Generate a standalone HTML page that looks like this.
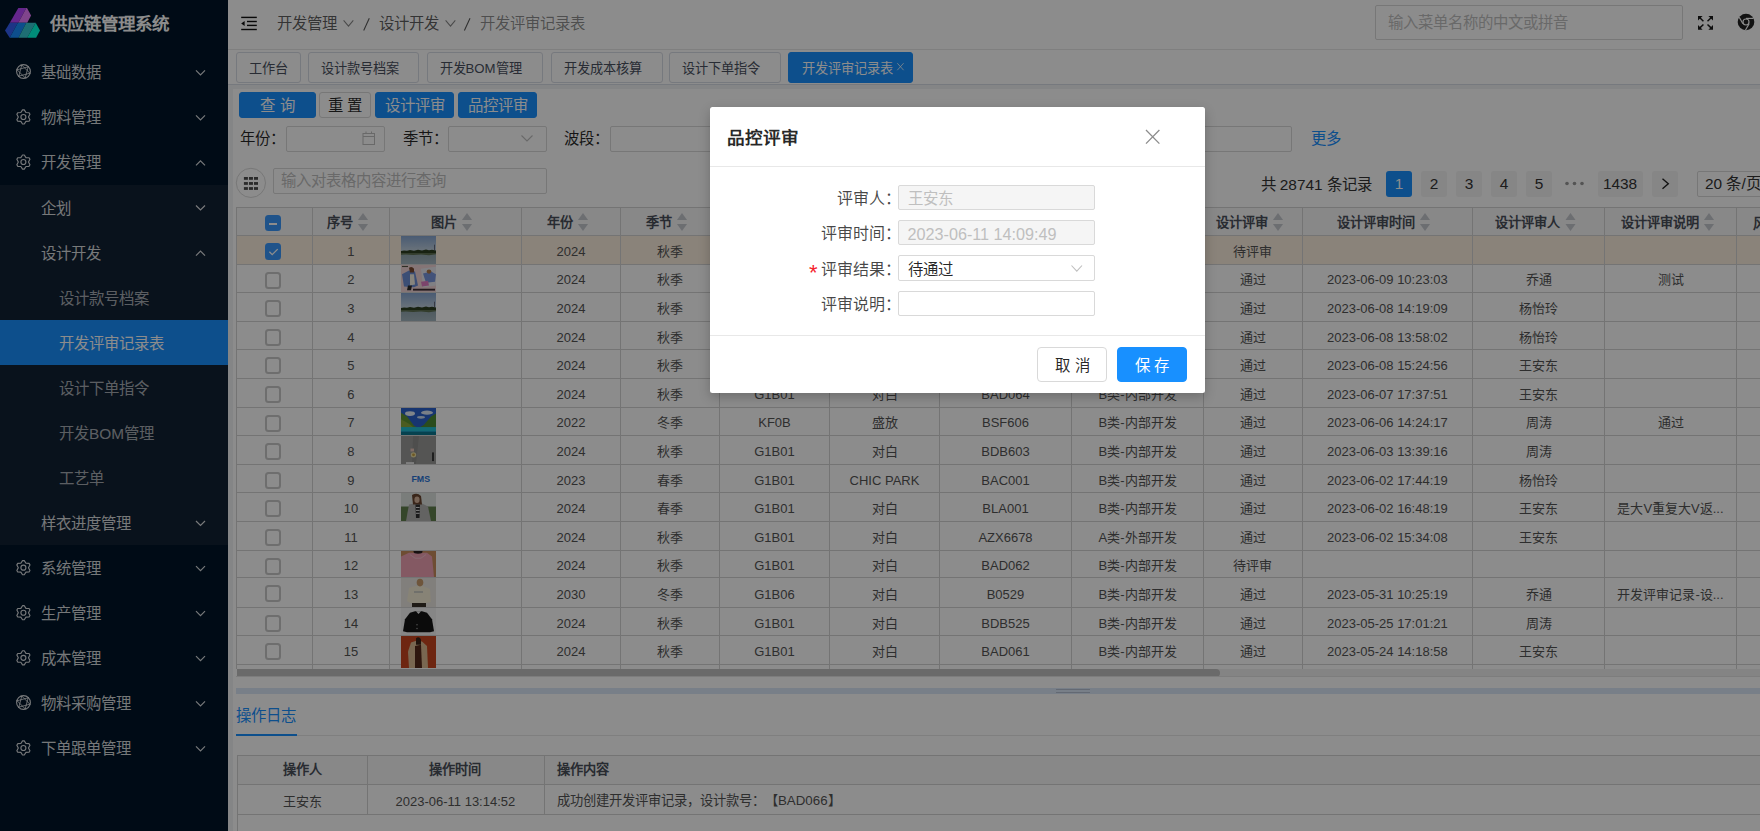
<!DOCTYPE html><html lang='zh-CN'><head><meta charset='utf-8'><style>*{box-sizing:border-box;margin:0;padding:0}
html,body{width:1760px;height:831px;overflow:hidden;background:#f0f2f5;font-family:'Liberation Sans',sans-serif;color:rgba(0,0,0,.65);text-spacing-trim:space-all}
.a{position:absolute}
.t{position:absolute;white-space:nowrap;line-height:1}
#side{position:absolute;left:0;top:0;width:228px;height:831px;background:#001529;z-index:2}
#sub{position:absolute;left:0;top:185px;width:228px;height:360px;background:#122133}
#act{position:absolute;left:0;top:320px;width:228px;height:45px;background:#1890ff}
.mt{font-size:15.4px;transform:translateY(-50%)}
.l0{color:rgba(255,255,255,.85)}
.l1{color:rgba(255,255,255,.85)}
.l2{color:rgba(255,255,255,.65)}
.lact{color:#fff}
.ttl{left:49.5px;top:25.3px;transform:translateY(-50%);font-size:17.5px;font-weight:bold;color:#fff}
#mask{position:absolute;left:0;top:0;width:1760px;height:831px;background:rgba(0,0,0,.45);z-index:10}
#hdr{position:absolute;left:228px;top:0;width:1532px;height:50px;background:#fff;border-bottom:1px solid #e8e8e8}
#tabs{position:absolute;left:228px;top:50px;width:1532px;height:35px;background:#fff;border-bottom:1px solid #d8dce5}
#panel{position:absolute;left:233px;top:88.7px;width:1527px;height:742.3px;background:#fff}
.bc{font-size:15.4px;transform:translateY(-50%)}
.ph{color:#bfbfbf;transform:translateY(-50%)}
.tab{position:absolute;top:52px;height:30.6px;border:1px solid #d8dce5;border-radius:3px;background:#fff;font-size:13.2px;line-height:31.4px;color:#495060;white-space:nowrap}
.tabact{background:#1890ff;border-color:#1890ff;color:#fff}
.btn{position:absolute;top:92px;height:26px;border-radius:3px;font-size:15.4px;line-height:26.8px;text-align:center;white-space:nowrap}
.bp{background:#1890ff;border:1px solid #1890ff;color:#fff}
.bd{background:#fff;border:1px solid #d9d9d9;color:rgba(0,0,0,.85)}
.inp{position:absolute;border:1px solid #d9d9d9;border-radius:2px;background:#fff}
.lbl{font-size:15.4px;color:rgba(0,0,0,.85);transform:translateY(-50%)}
.pg{position:absolute;top:171px;height:26px;border-radius:3px;background:#f4f4f5;font-size:15.4px;line-height:26px;text-align:center;color:#333}
.pga{background:#1890ff;color:#fff}
.hd{font-size:13.2px;font-weight:bold;color:#4a4f5a;transform:translate(-50%,-50%)}
.srt{display:inline-block;position:relative;width:11px;height:18px;margin-left:5px;vertical-align:middle;top:-2px}
.su{position:absolute;left:0;top:0;border-left:5.5px solid transparent;border-right:5.5px solid transparent;border-bottom:7px solid #c5c8ce}
.sd{position:absolute;left:0;top:11.8px;border-left:5.5px solid transparent;border-right:5.5px solid transparent;border-top:7px solid #c5c8ce}
.td{font-size:13px;color:#555;transform:translate(-50%,-50%)}
.cb{position:absolute;width:16.4px;height:16.4px;border:2px solid #c8c8c8;border-radius:3.5px;background:#fff}
.cbon{background:#3a98fc;border-color:#3a98fc}
#modal{position:absolute;left:710px;top:107.3px;width:495px;height:285.4px;background:#fff;border-radius:2.5px;box-shadow:0 4px 12px rgba(0,0,0,.22);z-index:11}
.mlb{font-size:16px;color:rgba(0,0,0,.72);transform:translateY(-50%)}
.mtx{font-size:15.4px;transform:translateY(-50%)}
.mbtn{position:absolute;height:34.4px;border-radius:4px;font-size:15.4px;line-height:35.4px;text-align:center;white-space:nowrap}
</style></head><body><div id='side'><div id='sub'></div><div id='act'></div><svg class='a' style='left:0;top:0' width='228' height='831' viewBox='0 0 228 831'>
<polygon points='18.3,8 26.3,8 18.3,22.8 9.8,22.8' fill='#b645ff'/>
<polygon points='26.3,8 27,8 31.1,15.4 27.2,22.8 18.3,22.8' fill='#e97cff'/>
<polygon points='9.8,22.8 17.9,22.8 9.7,37.8 5,30.6' fill='#335ff5'/>
<polygon points='17.9,22.8 26.3,22.8 18.5,37.8 9.7,37.8' fill='#198eff'/>
<polygon points='26.3,22.8 35.7,22.8 27.2,37.8 18.5,37.8' fill='#37c8d1'/>
<polygon points='35.7,22.8 40,30.6 36.1,37.8 27.2,37.8' fill='#00ffda'/>
<circle cx='23.50' cy='71.50' r='6.90' fill='none' stroke='rgba(255,255,255,0.85)' stroke-width='1.1'/><line x1='28.26' y1='66.50' x2='25.12' y2='78.21' stroke='rgba(255,255,255,0.85)' stroke-width='0.85'/><line x1='30.21' y1='73.12' x2='18.50' y2='76.26' stroke='rgba(255,255,255,0.85)' stroke-width='0.85'/><line x1='25.45' y1='78.12' x2='16.88' y2='69.55' stroke='rgba(255,255,255,0.85)' stroke-width='0.85'/><line x1='18.74' y1='76.50' x2='21.88' y2='64.79' stroke='rgba(255,255,255,0.85)' stroke-width='0.85'/><line x1='16.79' y1='69.88' x2='28.50' y2='66.74' stroke='rgba(255,255,255,0.85)' stroke-width='0.85'/><line x1='21.55' y1='64.88' x2='30.12' y2='73.45' stroke='rgba(255,255,255,0.85)' stroke-width='0.85'/><polyline points='196.0,70.3 200.5,74.8 205.0,70.3' fill='none' stroke='rgba(255,255,255,0.85)' stroke-width='1.2'/><path d='M22.53,109.92 L24.27,109.92 L25.95,112.55 L29.07,112.70 L29.94,114.20 L28.50,116.97 L29.94,119.74 L29.07,121.24 L25.95,121.39 L24.27,124.02 L22.53,124.02 L20.85,121.39 L17.73,121.24 L16.86,119.74 L18.30,116.97 L16.86,114.20 L17.73,112.70 L20.85,112.55Z' fill='none' stroke='rgba(255,255,255,0.85)' stroke-width='1.15' stroke-linejoin='round'/><circle cx='23.40' cy='116.97' r='2.5' fill='none' stroke='rgba(255,255,255,0.85)' stroke-width='1.15'/><polyline points='196.0,115.4 200.5,119.9 205.0,115.4' fill='none' stroke='rgba(255,255,255,0.85)' stroke-width='1.2'/><path d='M22.53,154.99 L24.27,154.99 L25.95,157.62 L29.07,157.77 L29.94,159.27 L28.50,162.04 L29.94,164.81 L29.07,166.31 L25.95,166.46 L24.27,169.09 L22.53,169.09 L20.85,166.46 L17.73,166.31 L16.86,164.81 L18.30,162.04 L16.86,159.27 L17.73,157.77 L20.85,157.62Z' fill='none' stroke='rgba(255,255,255,0.85)' stroke-width='1.15' stroke-linejoin='round'/><circle cx='23.40' cy='162.04' r='2.5' fill='none' stroke='rgba(255,255,255,0.85)' stroke-width='1.15'/><polyline points='196.0,165.4 200.5,160.9 205.0,165.4' fill='none' stroke='rgba(255,255,255,0.85)' stroke-width='1.2'/><polyline points='196.0,205.5 200.5,210.0 205.0,205.5' fill='none' stroke='rgba(255,255,255,0.85)' stroke-width='1.2'/><polyline points='196.0,255.6 200.5,251.1 205.0,255.6' fill='none' stroke='rgba(255,255,255,0.85)' stroke-width='1.2'/><polyline points='196.0,521.0 200.5,525.5 205.0,521.0' fill='none' stroke='rgba(255,255,255,0.85)' stroke-width='1.2'/><path d='M22.53,560.62 L24.27,560.62 L25.95,563.25 L29.07,563.40 L29.94,564.90 L28.50,567.67 L29.94,570.44 L29.07,571.94 L25.95,572.09 L24.27,574.72 L22.53,574.72 L20.85,572.09 L17.73,571.94 L16.86,570.44 L18.30,567.67 L16.86,564.90 L17.73,563.40 L20.85,563.25Z' fill='none' stroke='rgba(255,255,255,0.85)' stroke-width='1.15' stroke-linejoin='round'/><circle cx='23.40' cy='567.67' r='2.5' fill='none' stroke='rgba(255,255,255,0.85)' stroke-width='1.15'/><polyline points='196.0,566.1 200.5,570.6 205.0,566.1' fill='none' stroke='rgba(255,255,255,0.85)' stroke-width='1.2'/><path d='M22.53,605.69 L24.27,605.69 L25.95,608.32 L29.07,608.47 L29.94,609.97 L28.50,612.74 L29.94,615.51 L29.07,617.01 L25.95,617.16 L24.27,619.79 L22.53,619.79 L20.85,617.16 L17.73,617.01 L16.86,615.51 L18.30,612.74 L16.86,609.97 L17.73,608.47 L20.85,608.32Z' fill='none' stroke='rgba(255,255,255,0.85)' stroke-width='1.15' stroke-linejoin='round'/><circle cx='23.40' cy='612.74' r='2.5' fill='none' stroke='rgba(255,255,255,0.85)' stroke-width='1.15'/><polyline points='196.0,611.1 200.5,615.6 205.0,611.1' fill='none' stroke='rgba(255,255,255,0.85)' stroke-width='1.2'/><path d='M22.53,650.76 L24.27,650.76 L25.95,653.39 L29.07,653.54 L29.94,655.04 L28.50,657.81 L29.94,660.58 L29.07,662.08 L25.95,662.23 L24.27,664.86 L22.53,664.86 L20.85,662.23 L17.73,662.08 L16.86,660.58 L18.30,657.81 L16.86,655.04 L17.73,653.54 L20.85,653.39Z' fill='none' stroke='rgba(255,255,255,0.85)' stroke-width='1.15' stroke-linejoin='round'/><circle cx='23.40' cy='657.81' r='2.5' fill='none' stroke='rgba(255,255,255,0.85)' stroke-width='1.15'/><polyline points='196.0,656.2 200.5,660.7 205.0,656.2' fill='none' stroke='rgba(255,255,255,0.85)' stroke-width='1.2'/><circle cx='23.50' cy='702.48' r='6.90' fill='none' stroke='rgba(255,255,255,0.85)' stroke-width='1.1'/><line x1='28.26' y1='697.48' x2='25.12' y2='709.19' stroke='rgba(255,255,255,0.85)' stroke-width='0.85'/><line x1='30.21' y1='704.10' x2='18.50' y2='707.24' stroke='rgba(255,255,255,0.85)' stroke-width='0.85'/><line x1='25.45' y1='709.10' x2='16.88' y2='700.53' stroke='rgba(255,255,255,0.85)' stroke-width='0.85'/><line x1='18.74' y1='707.48' x2='21.88' y2='695.77' stroke='rgba(255,255,255,0.85)' stroke-width='0.85'/><line x1='16.79' y1='700.86' x2='28.50' y2='697.72' stroke='rgba(255,255,255,0.85)' stroke-width='0.85'/><line x1='21.55' y1='695.86' x2='30.12' y2='704.43' stroke='rgba(255,255,255,0.85)' stroke-width='0.85'/><polyline points='196.0,701.3 200.5,705.8 205.0,701.3' fill='none' stroke='rgba(255,255,255,0.85)' stroke-width='1.2'/><path d='M22.53,740.90 L24.27,740.90 L25.95,743.53 L29.07,743.68 L29.94,745.18 L28.50,747.95 L29.94,750.72 L29.07,752.22 L25.95,752.37 L24.27,755.00 L22.53,755.00 L20.85,752.37 L17.73,752.22 L16.86,750.72 L18.30,747.95 L16.86,745.18 L17.73,743.68 L20.85,743.53Z' fill='none' stroke='rgba(255,255,255,0.85)' stroke-width='1.15' stroke-linejoin='round'/><circle cx='23.40' cy='747.95' r='2.5' fill='none' stroke='rgba(255,255,255,0.85)' stroke-width='1.15'/><polyline points='196.0,746.3 200.5,750.8 205.0,746.3' fill='none' stroke='rgba(255,255,255,0.85)' stroke-width='1.2'/></svg><div class='t ttl'>供应链管理系统</div><div class='t mt l0' style='left:41px;top:73.3px'>基础数据</div><div class='t mt l0' style='left:41px;top:118.4px'>物料管理</div><div class='t mt l0' style='left:41px;top:163.4px'>开发管理</div><div class='t mt l1' style='left:41px;top:208.5px'>企划</div><div class='t mt l1' style='left:41px;top:253.6px'>设计开发</div><div class='t mt l2' style='left:59px;top:298.7px'>设计款号档案</div><div class='t mt lact' style='left:59px;top:343.7px'>开发评审记录表</div><div class='t mt l2' style='left:59px;top:388.8px'>设计下单指令</div><div class='t mt l2' style='left:59px;top:433.9px'>开发BOM管理</div><div class='t mt l2' style='left:59px;top:478.9px'>工艺单</div><div class='t mt l1' style='left:41px;top:524.0px'>样衣进度管理</div><div class='t mt l0' style='left:41px;top:569.1px'>系统管理</div><div class='t mt l0' style='left:41px;top:614.1px'>生产管理</div><div class='t mt l0' style='left:41px;top:659.2px'>成本管理</div><div class='t mt l0' style='left:41px;top:704.3px'>物料采购管理</div><div class='t mt l0' style='left:41px;top:749.3px'>下单跟单管理</div></div><div id='hdr'></div><div id='tabs'></div><div id='panel'></div><svg class='a' style='left:0;top:0;z-index:3' width='1760' height='90' viewBox='0 0 1760 90'>
<rect x='241.2' y='16.7' width='15.6' height='1.4' fill='#111'/>
<rect x='247' y='20.8' width='9.8' height='1.4' fill='#111'/>
<rect x='247' y='24.7' width='9.8' height='1.4' fill='#111'/>
<rect x='241.2' y='28.8' width='15.6' height='1.4' fill='#111'/>
<polygon points='241.2,23.4 244.6,20.9 244.6,25.9' fill='#111'/>
<polyline points='343.6,20.4 348.5,26.2 353.3,20.4' fill='none' stroke='#888' stroke-width='1.05'/>
<polyline points='445.6,20.4 450.5,26.2 455.3,20.4' fill='none' stroke='#888' stroke-width='1.05'/>
<line x1='369.3' y1='18.2' x2='363.7' y2='30.5' stroke='#555' stroke-width='1.05'/>
<line x1='470' y1='18.2' x2='464.4' y2='30.5' stroke='#555' stroke-width='1.05'/>
<g stroke='#1a1a1a' stroke-width='1.5' fill='#1a1a1a'>
<line x1='1699.3' y1='17.3' x2='1703.4' y2='21.2'/><polygon stroke='none' points='1698,16 1702.6,16 1698,20.6'/>
<line x1='1711.6' y1='17.3' x2='1707.5' y2='21.2'/><polygon stroke='none' points='1713,16 1708.4,16 1713,20.6'/>
<line x1='1699.3' y1='28.4' x2='1703.4' y2='24.5'/><polygon stroke='none' points='1698,29.7 1702.6,29.7 1698,25.1'/>
<line x1='1711.6' y1='28.4' x2='1707.5' y2='24.5'/><polygon stroke='none' points='1713,29.7 1708.4,29.7 1713,25.1'/>
</g>
<circle cx='1746' cy='22' r='8.3' fill='#222'/>
<circle cx='1746' cy='22' r='3.6' fill='#fff'/>
<circle cx='1746' cy='22' r='2.4' fill='#222'/>
<path d='M1746,18.4 L1753.5,18.4' stroke='#fff' stroke-width='1.2'/>
<path d='M1742.9,23.8 L1739.2,17.3' stroke='#fff' stroke-width='1.2'/>
<path d='M1749.1,23.8 L1745.4,30.2' stroke='#fff' stroke-width='1.2'/>
</svg><div class='t bc' style='left:277px;top:23.5px;color:rgba(0,0,0,.65)'>开发管理</div><div class='t bc' style='left:378.5px;top:23.5px;color:rgba(0,0,0,.65)'>设计开发</div><div class='t bc' style='left:479.5px;top:23.5px;color:rgba(0,0,0,.45)'>开发评审记录表</div><div class='inp' style='left:1375px;top:5px;width:308px;height:35px'></div><div class='t ph' style='left:1388px;top:22.5px;font-size:15.4px'>输入菜单名称的中文或拼音</div><div class='tab' style='left:236.4px;width:64.2px;padding-left:11.5px'>工作台</div><div class='tab' style='left:308.2px;width:111.3px;padding-left:11.5px'>设计款号档案</div><div class='tab' style='left:427.0px;width:116.4px;padding-left:11.5px'>开发BOM管理</div><div class='tab' style='left:551.4px;width:111.3px;padding-left:11.5px'>开发成本核算</div><div class='tab' style='left:669.3px;width:111.4px;padding-left:11.5px'>设计下单指令</div><div class='tab tabact' style='left:788px;width:125px;padding-left:12.5px'>开发评审记录表</div><svg class='a' style='left:0;top:0;z-index:1' width='920' height='90'><path d='M897.3,63.2 L903.6,70.2 M903.6,63.2 L897.3,70.2' stroke='rgba(255,255,255,.85)' stroke-width='0.9' fill='none'/></svg><div class='btn bp' style='left:239px;width:77px'>查&nbsp;询</div><div class='btn bd' style='left:319.3px;width:52px'>重&nbsp;置</div><div class='btn bp' style='left:375px;width:79px'>设计评审</div><div class='btn bp' style='left:458px;width:79px'>品控评审</div><div class='t lbl' style='left:240px;top:139px'>年份：</div><div class='inp' style='left:286px;top:126px;width:98.5px;height:25.5px'></div><div class='t lbl' style='left:402.5px;top:139px'>季节：</div><div class='inp' style='left:448px;top:126px;width:98.7px;height:25.5px'></div><div class='t lbl' style='left:564px;top:139px'>波段：</div><div class='inp' style='left:610px;top:126px;width:682.4px;height:25.5px'></div><div class='t' style='left:1310.5px;top:139px;font-size:15.4px;color:#1890ff;transform:translateY(-50%)'>更多</div><svg class='a' style='left:0;top:0;z-index:3' width='1760' height='210' viewBox='0 0 1760 210'>
<rect x='363' y='133.5' width='11.5' height='11' fill='none' stroke='#bfbfbf' stroke-width='1'/>
<line x1='363' y1='136.5' x2='374.5' y2='136.5' stroke='#bfbfbf' stroke-width='1'/>
<line x1='366' y1='131.5' x2='366' y2='134' stroke='#bfbfbf'/><line x1='371.5' y1='131.5' x2='371.5' y2='134' stroke='#bfbfbf'/>
<polyline points='521.5,135.5 527,141 532.5,135.5' fill='none' stroke='#bfbfbf' stroke-width='1.1'/>
<circle cx='250.9' cy='182.9' r='14.6' fill='#fff' stroke='#d9d9d9' stroke-width='1'/>
</svg><svg class='a' style='left:0;top:0;z-index:3' width='300' height='210'><rect x='243.90' y='177.00' width='4' height='2.8' fill='#4e4e4e'/><rect x='248.95' y='177.00' width='4' height='2.8' fill='#4e4e4e'/><rect x='254.00' y='177.00' width='4' height='2.8' fill='#4e4e4e'/><rect x='243.90' y='182.05' width='4' height='2.8' fill='#4e4e4e'/><rect x='248.95' y='182.05' width='4' height='2.8' fill='#4e4e4e'/><rect x='254.00' y='182.05' width='4' height='2.8' fill='#4e4e4e'/><rect x='243.90' y='187.10' width='4' height='2.8' fill='#4e4e4e'/><rect x='248.95' y='187.10' width='4' height='2.8' fill='#4e4e4e'/><rect x='254.00' y='187.10' width='4' height='2.8' fill='#4e4e4e'/></svg><div class='inp' style='left:272.5px;top:168px;width:274.2px;height:25.8px'></div><div class='t ph' style='left:281px;top:181px;font-size:15.4px'>输入对表格内容进行查询</div><div class='t' style='left:1260.5px;top:184.5px;font-size:15.4px;color:#333;transform:translateY(-50%)'>共 28741 条记录</div><div class='pg pga' style='left:1386.0px;width:26.0px'>1</div><div class='pg' style='left:1421.0px;width:26.0px'>2</div><div class='pg' style='left:1456.0px;width:26.0px'>3</div><div class='pg' style='left:1491.0px;width:26.0px'>4</div><div class='pg' style='left:1526.0px;width:26.0px'>5</div><div class='pg' style='left:1597.5px;width:45.0px'>1438</div><div class='pg' style='left:1652.0px;width:25.7px'></div><svg class='a' style='left:1560px;top:176px;z-index:1' width='30' height='14'><circle cx='7' cy='7.5' r='1.8' fill='#9a9a9a'/><circle cx='14.5' cy='7.5' r='1.8' fill='#9a9a9a'/><circle cx='22' cy='7.5' r='1.8' fill='#9a9a9a'/></svg><svg class='a' style='left:1652px;top:171px;z-index:1' width='26' height='26'><polyline points='10.5,7.8 16.3,12.8 10.5,17.8' fill='none' stroke='#222' stroke-width='1.4'/></svg><div class='inp' style='left:1696.5px;top:171px;width:120px;height:25.5px'></div><div class='t' style='left:1705px;top:184px;font-size:15.4px;color:#333;transform:translateY(-50%)'>20 条/页</div><div class='a' style='left:236px;top:207px;width:1524px;height:28px;background:#f7f7f7'></div><div class='a' style='left:236px;top:235px;width:1524px;height:29px;background:#fbeede'></div><div class='a' style='left:236px;top:207px;width:1524px;height:1px;background:#d4d4d4'></div><div class='a' style='left:236px;top:235px;width:1524px;height:1px;background:#d4d4d4'></div><div class='a' style='left:236px;top:264px;width:1524px;height:1px;background:#d4d4d4'></div><div class='a' style='left:236px;top:292px;width:1524px;height:1px;background:#d4d4d4'></div><div class='a' style='left:236px;top:321px;width:1524px;height:1px;background:#d4d4d4'></div><div class='a' style='left:236px;top:349px;width:1524px;height:1px;background:#d4d4d4'></div><div class='a' style='left:236px;top:378px;width:1524px;height:1px;background:#d4d4d4'></div><div class='a' style='left:236px;top:407px;width:1524px;height:1px;background:#d4d4d4'></div><div class='a' style='left:236px;top:435px;width:1524px;height:1px;background:#d4d4d4'></div><div class='a' style='left:236px;top:464px;width:1524px;height:1px;background:#d4d4d4'></div><div class='a' style='left:236px;top:492px;width:1524px;height:1px;background:#d4d4d4'></div><div class='a' style='left:236px;top:521px;width:1524px;height:1px;background:#d4d4d4'></div><div class='a' style='left:236px;top:550px;width:1524px;height:1px;background:#d4d4d4'></div><div class='a' style='left:236px;top:577px;width:1524px;height:1px;background:#d4d4d4'></div><div class='a' style='left:236px;top:607px;width:1524px;height:1px;background:#d4d4d4'></div><div class='a' style='left:236px;top:635px;width:1524px;height:1px;background:#d4d4d4'></div><div class='a' style='left:236px;top:664px;width:1524px;height:1px;background:#d4d4d4'></div><div class='a' style='left:236px;top:207px;width:1px;height:462px;background:#d4d4d4'></div><div class='a' style='left:312px;top:207px;width:1px;height:462px;background:#d4d4d4'></div><div class='a' style='left:389px;top:207px;width:1px;height:462px;background:#d4d4d4'></div><div class='a' style='left:521px;top:207px;width:1px;height:462px;background:#d4d4d4'></div><div class='a' style='left:620px;top:207px;width:1px;height:462px;background:#d4d4d4'></div><div class='a' style='left:719px;top:207px;width:1px;height:462px;background:#d4d4d4'></div><div class='a' style='left:829px;top:207px;width:1px;height:462px;background:#d4d4d4'></div><div class='a' style='left:939px;top:207px;width:1px;height:462px;background:#d4d4d4'></div><div class='a' style='left:1071px;top:207px;width:1px;height:462px;background:#d4d4d4'></div><div class='a' style='left:1203px;top:207px;width:1px;height:462px;background:#d4d4d4'></div><div class='a' style='left:1302px;top:207px;width:1px;height:462px;background:#d4d4d4'></div><div class='a' style='left:1472px;top:207px;width:1px;height:462px;background:#d4d4d4'></div><div class='a' style='left:1604px;top:207px;width:1px;height:462px;background:#d4d4d4'></div><div class='a' style='left:1736px;top:207px;width:1px;height:462px;background:#d4d4d4'></div><div class='t hd' style='left:347.9px;top:223.6px'>序号<span class='srt'><i class='su'></i><i class='sd'></i></span></div><div class='t hd' style='left:452.4px;top:223.6px'>图片<span class='srt'><i class='su'></i><i class='sd'></i></span></div><div class='t hd' style='left:568.0px;top:223.6px'>年份<span class='srt'><i class='su'></i><i class='sd'></i></span></div><div class='t hd' style='left:667.0px;top:223.6px'>季节<span class='srt'><i class='su'></i><i class='sd'></i></span></div><div class='t hd' style='left:771.5px;top:223.6px'>波段<span class='srt'><i class='su'></i><i class='sd'></i></span></div><div class='t hd' style='left:881.5px;top:223.6px'>品牌<span class='srt'><i class='su'></i><i class='sd'></i></span></div><div class='t hd' style='left:1002.5px;top:223.6px'>设计款号<span class='srt'><i class='su'></i><i class='sd'></i></span></div><div class='t hd' style='left:1134.6px;top:223.6px'>开发类型<span class='srt'><i class='su'></i><i class='sd'></i></span></div><div class='t hd' style='left:1249.9px;top:223.6px'>设计评审<span class='srt'><i class='su'></i><i class='sd'></i></span></div><div class='t hd' style='left:1384.4px;top:223.6px'>设计评审时间<span class='srt'><i class='su'></i><i class='sd'></i></span></div><div class='t hd' style='left:1535.5px;top:223.6px'>设计评审人<span class='srt'><i class='su'></i><i class='sd'></i></span></div><div class='t hd' style='left:1667.5px;top:223.6px'>设计评审说明<span class='srt'><i class='su'></i><i class='sd'></i></span></div><div class='t hd' style='left:1799.2px;top:223.6px'>风格<span class='srt'><i class='su'></i><i class='sd'></i></span></div><div class='cb cbon' style='left:265px;top:215px'><i style='position:absolute;left:2.1px;top:6.4px;width:8.2px;height:1.2px;background:#fff'></i></div><div class='t hd' style='left:1752.5px;top:223.6px;transform:translateY(-50%)'>风格</div><div class='cb cbon' style='left:265px;top:243.2px'><svg class='a' style='left:0;top:0' width='13' height='13'><polyline points='2.4,6.8 5.2,9.6 10.7,4.1' fill='none' stroke='#fff' stroke-width='1.3'/></svg></div><div class='t td' style='left:350.9px;top:250.7px'>1</div><svg class='a' style='left:401.0px;top:236.0px' width='35.0' height='28.0' viewBox='0 0 35 29' preserveAspectRatio='none'><defs><linearGradient id='lk' x1='0' y1='0' x2='0' y2='1'><stop offset='0' stop-color='#86a6d2'/><stop offset='1' stop-color='#c8d6e0'/></linearGradient><linearGradient id='lw' x1='0' y1='0' x2='0' y2='1'><stop offset='0' stop-color='#8fa4ac'/><stop offset='1' stop-color='#a4b6c0'/></linearGradient></defs><rect width='35' height='17' fill='url(#lk)'/><rect y='17' width='35' height='12' fill='url(#lw)'/><path d='M0,15.6 L3,14.9 L6,15.4 L9,14.6 L13,15.3 L17,14.2 L21,14.9 L25,14 L28,14.8 L31,14.2 L35,14.9 V17.6 H0Z' fill='#2c3f22'/><path d='M0,17.5 L35,17.5 V19 L28,20 L20,19.2 L12,19.8 L5,19.2 L0,19.5Z' fill='#5d7050'/><rect x='33.3' y='9' width='0.7' height='6' fill='#445'/></svg><div class='t td' style='left:571.0px;top:250.7px'>2024</div><div class='t td' style='left:670.0px;top:250.7px'>秋季</div><div class='t td' style='left:774.5px;top:250.7px'>G1B01</div><div class='t td' style='left:884.5px;top:250.7px'>对白</div><div class='t td' style='left:1005.5px;top:250.7px'>BAD066</div><div class='t td' style='left:1137.6px;top:250.7px'>B类-内部开发</div><div class='t td' style='left:1252.9px;top:250.7px'>待评审</div><div class='cb' style='left:265px;top:272.2px'></div><div class='t td' style='left:350.9px;top:279.3px'>2</div><svg class='a' style='left:401.0px;top:265.0px' width='35.0' height='27.0' viewBox='0 0 35 29' preserveAspectRatio='none'><rect width='35' height='29' fill='#f2d6d8'/><path d='M20,4 L35,2 L35,22 L22,24Z' fill='#eaeaf0'/><path d='M1,10 L8,6 L14,7 L17,22 L13,24 L3,23Z' fill='#6d8ed6'/><path d='M9,10 L13,10 L14,21 L9,22Z' fill='#f4f0e4'/><path d='M8,3 Q11,1 13,4 L13,8 L9,8Z' fill='#7a4a30'/><path d='M22,9 L30,7 L35,10 L34,18 L25,19Z' fill='#7896dc'/><circle cx='28' cy='7' r='2.3' fill='#b07848'/><path d='M20,18 L27,17 L28,22 L21,23Z' fill='#e07cc4'/><path d='M7,22 L11,22 L10,27 L6,27Z' fill='#2a2a2a'/><rect x='12' y='25.5' width='22' height='2' fill='#3a2a30'/><rect x='1' y='1' width='6' height='1.2' fill='#554'/></svg><div class='t td' style='left:571.0px;top:279.3px'>2024</div><div class='t td' style='left:670.0px;top:279.3px'>秋季</div><div class='t td' style='left:774.5px;top:279.3px'>G1B01</div><div class='t td' style='left:884.5px;top:279.3px'>对白</div><div class='t td' style='left:1005.5px;top:279.3px'>BAD065</div><div class='t td' style='left:1137.6px;top:279.3px'>B类-内部开发</div><div class='t td' style='left:1252.9px;top:279.3px'>通过</div><div class='t td' style='left:1387.4px;top:279.3px'>2023-06-09 10:23:03</div><div class='t td' style='left:1538.5px;top:279.3px'>乔通</div><div class='t td' style='left:1670.5px;top:279.3px'>测试</div><div class='cb' style='left:265px;top:300.2px'></div><div class='t td' style='left:350.9px;top:307.9px'>3</div><svg class='a' style='left:401.0px;top:293.0px' width='35.0' height='28.0' viewBox='0 0 35 29' preserveAspectRatio='none'><defs><linearGradient id='lk' x1='0' y1='0' x2='0' y2='1'><stop offset='0' stop-color='#86a6d2'/><stop offset='1' stop-color='#c8d6e0'/></linearGradient><linearGradient id='lw' x1='0' y1='0' x2='0' y2='1'><stop offset='0' stop-color='#8fa4ac'/><stop offset='1' stop-color='#a4b6c0'/></linearGradient></defs><rect width='35' height='17' fill='url(#lk)'/><rect y='17' width='35' height='12' fill='url(#lw)'/><path d='M0,15.6 L3,14.9 L6,15.4 L9,14.6 L13,15.3 L17,14.2 L21,14.9 L25,14 L28,14.8 L31,14.2 L35,14.9 V17.6 H0Z' fill='#2c3f22'/><path d='M0,17.5 L35,17.5 V19 L28,20 L20,19.2 L12,19.8 L5,19.2 L0,19.5Z' fill='#5d7050'/><rect x='33.3' y='9' width='0.7' height='6' fill='#445'/></svg><div class='t td' style='left:571.0px;top:307.9px'>2024</div><div class='t td' style='left:670.0px;top:307.9px'>秋季</div><div class='t td' style='left:774.5px;top:307.9px'>G1B01</div><div class='t td' style='left:884.5px;top:307.9px'>对白</div><div class='t td' style='left:1005.5px;top:307.9px'>BAD063</div><div class='t td' style='left:1137.6px;top:307.9px'>B类-内部开发</div><div class='t td' style='left:1252.9px;top:307.9px'>通过</div><div class='t td' style='left:1387.4px;top:307.9px'>2023-06-08 14:19:09</div><div class='t td' style='left:1538.5px;top:307.9px'>杨怡玲</div><div class='cb' style='left:265px;top:329.2px'></div><div class='t td' style='left:350.9px;top:336.5px'>4</div><div class='t td' style='left:571.0px;top:336.5px'>2024</div><div class='t td' style='left:670.0px;top:336.5px'>秋季</div><div class='t td' style='left:774.5px;top:336.5px'>G1B01</div><div class='t td' style='left:884.5px;top:336.5px'>对白</div><div class='t td' style='left:1005.5px;top:336.5px'>BAD060</div><div class='t td' style='left:1137.6px;top:336.5px'>B类-内部开发</div><div class='t td' style='left:1252.9px;top:336.5px'>通过</div><div class='t td' style='left:1387.4px;top:336.5px'>2023-06-08 13:58:02</div><div class='t td' style='left:1538.5px;top:336.5px'>杨怡玲</div><div class='cb' style='left:265px;top:357.2px'></div><div class='t td' style='left:350.9px;top:365.1px'>5</div><div class='t td' style='left:571.0px;top:365.1px'>2024</div><div class='t td' style='left:670.0px;top:365.1px'>秋季</div><div class='t td' style='left:774.5px;top:365.1px'>G1B01</div><div class='t td' style='left:884.5px;top:365.1px'>对白</div><div class='t td' style='left:1005.5px;top:365.1px'>BAD059</div><div class='t td' style='left:1137.6px;top:365.1px'>B类-内部开发</div><div class='t td' style='left:1252.9px;top:365.1px'>通过</div><div class='t td' style='left:1387.4px;top:365.1px'>2023-06-08 15:24:56</div><div class='t td' style='left:1538.5px;top:365.1px'>王安东</div><div class='cb' style='left:265px;top:386.2px'></div><div class='t td' style='left:350.9px;top:393.7px'>6</div><div class='t td' style='left:571.0px;top:393.7px'>2024</div><div class='t td' style='left:670.0px;top:393.7px'>秋季</div><div class='t td' style='left:774.5px;top:393.7px'>G1B01</div><div class='t td' style='left:884.5px;top:393.7px'>对白</div><div class='t td' style='left:1005.5px;top:393.7px'>BAD064</div><div class='t td' style='left:1137.6px;top:393.7px'>B类-内部开发</div><div class='t td' style='left:1252.9px;top:393.7px'>通过</div><div class='t td' style='left:1387.4px;top:393.7px'>2023-06-07 17:37:51</div><div class='t td' style='left:1538.5px;top:393.7px'>王安东</div><div class='cb' style='left:265px;top:415.2px'></div><div class='t td' style='left:350.9px;top:422.3px'>7</div><svg class='a' style='left:401.0px;top:408.0px' width='35.0' height='27.0' viewBox='0 0 35 29' preserveAspectRatio='none'><rect width='35' height='29' fill='#2a62cc'/><ellipse cx='9' cy='6' rx='5' ry='2.6' fill='#e8f0fa'/><ellipse cx='26' cy='5' rx='6' ry='2.2' fill='#dde8f6'/><ellipse cx='20' cy='10' rx='4' ry='1.5' fill='#c8daf0'/><path d='M0,5 L6,9 L13,19 L18,22 L0,22Z' fill='#5f9433'/><path d='M35,6 L30,9 L23,18 L17,22 L35,22Z' fill='#4e8a34'/><path d='M0,12 L8,17 L14,22 L0,22Z' fill='#8aa83c'/><rect y='20.5' width='35' height='5' fill='#22c0d4'/><rect y='25.5' width='35' height='3.5' fill='#0c7890'/></svg><div class='t td' style='left:571.0px;top:422.3px'>2022</div><div class='t td' style='left:670.0px;top:422.3px'>冬季</div><div class='t td' style='left:774.5px;top:422.3px'>KF0B</div><div class='t td' style='left:884.5px;top:422.3px'>盛放</div><div class='t td' style='left:1005.5px;top:422.3px'>BSF606</div><div class='t td' style='left:1137.6px;top:422.3px'>B类-内部开发</div><div class='t td' style='left:1252.9px;top:422.3px'>通过</div><div class='t td' style='left:1387.4px;top:422.3px'>2023-06-06 14:24:17</div><div class='t td' style='left:1538.5px;top:422.3px'>周涛</div><div class='t td' style='left:1670.5px;top:422.3px'>通过</div><div class='cb' style='left:265px;top:443.2px'></div><div class='t td' style='left:350.9px;top:450.9px'>8</div><svg class='a' style='left:401.0px;top:436.0px' width='35.0' height='28.0' viewBox='0 0 35 29' preserveAspectRatio='none'><rect width='35' height='29' fill='#9c9c9a'/><path d='M12,0 L18,0 L15,29 L11,29Z' fill='#8e8e8c'/><rect x='9.5' y='13' width='3.5' height='3' fill='#e8c4b8'/><circle cx='12.5' cy='19.5' r='2.7' fill='#efe2a4'/><circle cx='12.5' cy='19.5' r='1.4' fill='#c8a040'/><rect x='31' y='17' width='2' height='9' fill='#3a3a3a'/><rect x='5' y='27' width='8' height='2' fill='#e8e8e8'/></svg><div class='t td' style='left:571.0px;top:450.9px'>2024</div><div class='t td' style='left:670.0px;top:450.9px'>秋季</div><div class='t td' style='left:774.5px;top:450.9px'>G1B01</div><div class='t td' style='left:884.5px;top:450.9px'>对白</div><div class='t td' style='left:1005.5px;top:450.9px'>BDB603</div><div class='t td' style='left:1137.6px;top:450.9px'>B类-内部开发</div><div class='t td' style='left:1252.9px;top:450.9px'>通过</div><div class='t td' style='left:1387.4px;top:450.9px'>2023-06-03 13:39:16</div><div class='t td' style='left:1538.5px;top:450.9px'>周涛</div><div class='cb' style='left:265px;top:472.2px'></div><div class='t td' style='left:350.9px;top:479.5px'>9</div><svg class='a' style='left:401.0px;top:465.0px' width='35.0' height='27.0' viewBox='0 0 35 29' preserveAspectRatio='none'><text x='19.8' y='18.4' text-anchor='middle' font-family='Liberation Sans' font-weight='bold' font-size='8.8' fill='#2a74d8'>FMS</text></svg><div class='t td' style='left:571.0px;top:479.5px'>2023</div><div class='t td' style='left:670.0px;top:479.5px'>春季</div><div class='t td' style='left:774.5px;top:479.5px'>G1B01</div><div class='t td' style='left:884.5px;top:479.5px'>CHIC PARK</div><div class='t td' style='left:1005.5px;top:479.5px'>BAC001</div><div class='t td' style='left:1137.6px;top:479.5px'>B类-内部开发</div><div class='t td' style='left:1252.9px;top:479.5px'>通过</div><div class='t td' style='left:1387.4px;top:479.5px'>2023-06-02 17:44:19</div><div class='t td' style='left:1538.5px;top:479.5px'>杨怡玲</div><div class='cb' style='left:265px;top:500.2px'></div><div class='t td' style='left:350.9px;top:508.1px'>10</div><svg class='a' style='left:401.0px;top:493.0px' width='35.0' height='28.0' viewBox='0 0 35 29' preserveAspectRatio='none'><rect width='35' height='29' fill='#dfe3e0'/><rect y='14' width='35' height='15' fill='#62804e'/><path d='M8,12 L14,11 L21,11 L27,14 L30,29 L5,29Z' fill='#b4b4b2'/><path d='M11,2 Q16,-1 20,3 L21,12 L12,12Z' fill='#6a4630'/><ellipse cx='16' cy='7' rx='2.6' ry='3.4' fill='#d8b49c'/><path d='M14.5,12 L19,12 L18.5,26 L15,26Z' fill='#303030'/><path d='M15,15 L18.6,15 M15,18 L18.6,18 M15,21 L18.6,21' stroke='#eee' stroke-width='1'/></svg><div class='t td' style='left:571.0px;top:508.1px'>2024</div><div class='t td' style='left:670.0px;top:508.1px'>春季</div><div class='t td' style='left:774.5px;top:508.1px'>G1B01</div><div class='t td' style='left:884.5px;top:508.1px'>对白</div><div class='t td' style='left:1005.5px;top:508.1px'>BLA001</div><div class='t td' style='left:1137.6px;top:508.1px'>B类-内部开发</div><div class='t td' style='left:1252.9px;top:508.1px'>通过</div><div class='t td' style='left:1387.4px;top:508.1px'>2023-06-02 16:48:19</div><div class='t td' style='left:1538.5px;top:508.1px'>王安东</div><div class='t td' style='left:1670.5px;top:508.1px'>是大V重复大V返...</div><div class='cb' style='left:265px;top:529.2px'></div><div class='t td' style='left:350.9px;top:536.7px'>11</div><div class='t td' style='left:571.0px;top:536.7px'>2024</div><div class='t td' style='left:670.0px;top:536.7px'>秋季</div><div class='t td' style='left:774.5px;top:536.7px'>G1B01</div><div class='t td' style='left:884.5px;top:536.7px'>对白</div><div class='t td' style='left:1005.5px;top:536.7px'>AZX6678</div><div class='t td' style='left:1137.6px;top:536.7px'>A类-外部开发</div><div class='t td' style='left:1252.9px;top:536.7px'>通过</div><div class='t td' style='left:1387.4px;top:536.7px'>2023-06-02 15:34:08</div><div class='t td' style='left:1538.5px;top:536.7px'>王安东</div><div class='cb' style='left:265px;top:558.2px'></div><div class='t td' style='left:350.9px;top:565.3px'>12</div><svg class='a' style='left:401.0px;top:551.0px' width='35.0' height='26.0' viewBox='0 0 35 29' preserveAspectRatio='none'><rect width='35' height='29' fill='#c88d5e'/><path d='M0,6 L8,2 L26,2 L31,6 L33,29 L0,29Z' fill='#f0a2b4'/><path d='M9,4 L14,8 L20,8 L25,4' fill='none' stroke='#f6c4cf' stroke-width='1'/><ellipse cx='17' cy='0.8' rx='4.5' ry='2.2' fill='#2a2020'/></svg><div class='t td' style='left:571.0px;top:565.3px'>2024</div><div class='t td' style='left:670.0px;top:565.3px'>秋季</div><div class='t td' style='left:774.5px;top:565.3px'>G1B01</div><div class='t td' style='left:884.5px;top:565.3px'>对白</div><div class='t td' style='left:1005.5px;top:565.3px'>BAD062</div><div class='t td' style='left:1137.6px;top:565.3px'>B类-内部开发</div><div class='t td' style='left:1252.9px;top:565.3px'>待评审</div><div class='cb' style='left:265px;top:585.2px'></div><div class='t td' style='left:350.9px;top:593.9px'>13</div><svg class='a' style='left:401.0px;top:578.0px' width='35.0' height='29.0' viewBox='0 0 35 29' preserveAspectRatio='none'><rect width='35' height='29' fill='#ebe8e2'/><path d='M8,10 L14,8 L22,8 L29,11 L30,24 L26,25 L9,25 L6,23Z' fill='#f6eed8'/><ellipse cx='19' cy='4.6' rx='3.3' ry='3.8' fill='#c89c6c'/><path d='M13,14 L22,14' stroke='#b0b8b8' stroke-width='1.2'/><rect x='11' y='25' width='14' height='4' fill='#3a3228'/></svg><div class='t td' style='left:571.0px;top:593.9px'>2030</div><div class='t td' style='left:670.0px;top:593.9px'>冬季</div><div class='t td' style='left:774.5px;top:593.9px'>G1B06</div><div class='t td' style='left:884.5px;top:593.9px'>对白</div><div class='t td' style='left:1005.5px;top:593.9px'>B0529</div><div class='t td' style='left:1137.6px;top:593.9px'>B类-内部开发</div><div class='t td' style='left:1252.9px;top:593.9px'>通过</div><div class='t td' style='left:1387.4px;top:593.9px'>2023-05-31 10:25:19</div><div class='t td' style='left:1538.5px;top:593.9px'>乔通</div><div class='t td' style='left:1670.5px;top:593.9px'>开发评审记录-设...</div><div class='cb' style='left:265px;top:615.2px'></div><div class='t td' style='left:350.9px;top:622.5px'>14</div><svg class='a' style='left:401.0px;top:608.0px' width='35.0' height='27.0' viewBox='0 0 35 29' preserveAspectRatio='none'><rect width='35' height='29' fill='#f4f4f4'/><path d='M9,5 L14,3.5 L21,3.5 L26,5 L31,12 L33,25 L29,26 L6,26 L2,25 L4,12Z' fill='#151515'/><path d='M15,3.5 L20,3.5 L17.5,6.5Z' fill='#f4f4f4'/><circle cx='16' cy='18' r='0.8' fill='#888'/><circle cx='16' cy='22' r='0.8' fill='#888'/></svg><div class='t td' style='left:571.0px;top:622.5px'>2024</div><div class='t td' style='left:670.0px;top:622.5px'>秋季</div><div class='t td' style='left:774.5px;top:622.5px'>G1B01</div><div class='t td' style='left:884.5px;top:622.5px'>对白</div><div class='t td' style='left:1005.5px;top:622.5px'>BDB525</div><div class='t td' style='left:1137.6px;top:622.5px'>B类-内部开发</div><div class='t td' style='left:1252.9px;top:622.5px'>通过</div><div class='t td' style='left:1387.4px;top:622.5px'>2023-05-25 17:01:21</div><div class='t td' style='left:1538.5px;top:622.5px'>周涛</div><div class='cb' style='left:265px;top:643.2px'></div><div class='t td' style='left:350.9px;top:651.1px'>15</div><svg class='a' style='left:401.0px;top:636.0px' width='35.0' height='32.0' viewBox='0 0 35 29' preserveAspectRatio='none'><rect width='35' height='29' fill='#c9461f'/><path d='M10,6 L16,4 L21,5 L26,9 L27,29 L8,29 L7,14Z' fill='#dcbc94'/><path d='M15,2 Q18,0 20,3 L20,8 L15,8Z' fill='#3a2418'/><path d='M14,9 L20,8 L21,29 L14,29Z' fill='#54281a'/></svg><div class='t td' style='left:571.0px;top:651.1px'>2024</div><div class='t td' style='left:670.0px;top:651.1px'>秋季</div><div class='t td' style='left:774.5px;top:651.1px'>G1B01</div><div class='t td' style='left:884.5px;top:651.1px'>对白</div><div class='t td' style='left:1005.5px;top:651.1px'>BAD061</div><div class='t td' style='left:1137.6px;top:651.1px'>B类-内部开发</div><div class='t td' style='left:1252.9px;top:651.1px'>通过</div><div class='t td' style='left:1387.4px;top:651.1px'>2023-05-24 14:18:58</div><div class='t td' style='left:1538.5px;top:651.1px'>王安东</div><div class='a' style='left:236.5px;top:669px;width:1524px;height:7.5px;background:#f1f1f1'></div><div class='a' style='left:236.5px;top:669px;width:983.2px;height:7.5px;background:#c1c1c1;border-radius:0 4px 4px 0'></div><div class='a' style='left:236px;top:676px;width:1524px;height:1px;background:#e4e4e4'></div><div class='a' style='left:236px;top:687.6px;width:1524px;height:6.2px;background:#dbe8f8'></div><div class='a' style='left:1056.4px;top:689px;width:33.2px;height:1px;background:#b4c0d2'></div><div class='a' style='left:1056.4px;top:692px;width:33.2px;height:1px;background:#b4c0d2'></div><div class='t' style='left:236px;top:715.5px;font-size:15.4px;color:#1890ff;transform:translateY(-50%)'>操作日志</div><div class='a' style='left:236px;top:735px;width:1524px;height:1px;background:#e8e8e8'></div><div class='a' style='left:236px;top:734px;width:61px;height:2px;background:#1890ff'></div><div class='a' style='left:236.6px;top:754.5px;width:1524px;height:30px;background:#f7f7f7'></div><div class='a' style='left:236.6px;top:754.5px;width:1524px;height:1px;background:#d4d4d4'></div><div class='a' style='left:236.6px;top:784.3px;width:1524px;height:1px;background:#d4d4d4'></div><div class='a' style='left:236.6px;top:814.2px;width:1524px;height:1px;background:#d4d4d4'></div><div class='a' style='left:236.6px;top:754.5px;width:1px;height:77px;background:#d4d4d4'></div><div class='a' style='left:367.3px;top:754.5px;width:1px;height:60px;background:#d4d4d4'></div><div class='a' style='left:543.5px;top:754.5px;width:1px;height:60px;background:#d4d4d4'></div><div class='t hd' style='left:302px;top:770px'>操作人</div><div class='t hd' style='left:455.4px;top:770px'>操作时间</div><div class='t hd' style='left:557px;top:770px;transform:translateY(-50%)'>操作内容</div><div class='t td' style='left:302px;top:801px'>王安东</div><div class='t td' style='left:455.4px;top:800.5px'>2023-06-11 13:14:52</div><div class='t td' style='left:557px;top:801px;font-size:13.3px;transform:translateY(-50%)'>成功创建开发评审记录，设计款号：【BAD066】</div><div id='mask'></div><div id='modal'><div class='t' style='left:17.4px;top:31.5px;font-size:17.6px;font-weight:bold;color:rgba(0,0,0,.85);transform:translateY(-50%)'>品控评审</div><svg class='a' style='left:435.0px;top:22.0px' width='16' height='16' viewBox='0 0 16 16'><path d='M1,1 L14.4,14.6 M14.4,1 L1,14.6' stroke='#8c8c8c' stroke-width='1.3' fill='none'/></svg><div class='a' style='left:0;top:58.7px;width:495px;height:1px;background:#e8e8e8'></div><div class='t mlb' style='right:304.2px;top:92.2px'>评审人：</div><div class='t mlb' style='right:304.2px;top:127.2px'>评审时间：</div><div class='t mlb' style='right:304.2px;top:162.5px'>评审结果：</div><div class='t mlb' style='right:304.2px;top:198.2px'>评审说明：</div><div class='t' style='left:98.9px;top:165.3px;font-size:22px;color:#f5222d;transform:translateY(-50%)'>*</div><div class='inp' style='left:188.4px;top:78.0px;width:197.1px;height:25.1px;background:#f5f5f5'></div><div class='inp' style='left:188.4px;top:113.1px;width:197.1px;height:25.1px;background:#f5f5f5'></div><div class='inp' style='left:188.4px;top:148.0px;width:197.1px;height:26.2px;background:#fff'></div><div class='inp' style='left:188.4px;top:184.0px;width:197.1px;height:25.1px;background:#fff'></div><div class='t mtx' style='left:197.5px;top:92.2px;color:#bfbfbf'>王安东</div><div class='t mtx' style='left:197.5px;top:126.7px;color:#bfbfbf;font-size:16.2px'>2023-06-11 14:09:49</div><div class='t mtx' style='left:197.5px;top:162.5px;color:rgba(0,0,0,.85)'>待通过</div><svg class='a' style='left:360.0px;top:157.0px' width='14' height='9'><polyline points='1.5,1.5 6.8,7.2 12,1.5' fill='none' stroke='#bfbfbf' stroke-width='1.1'/></svg><div class='a' style='left:0;top:227.7px;width:495px;height:1px;background:#e8e8e8'></div><div class='mbtn' style='left:327.3px;top:240.0px;width:70.2px;background:#fff;border:1px solid #d9d9d9;color:rgba(0,0,0,.85)'>取&nbsp;消</div><div class='mbtn' style='left:407.2px;top:240.0px;width:69.6px;background:#1890ff;border:1px solid #1890ff;color:#fff'>保&nbsp;存</div></div></body></html>
